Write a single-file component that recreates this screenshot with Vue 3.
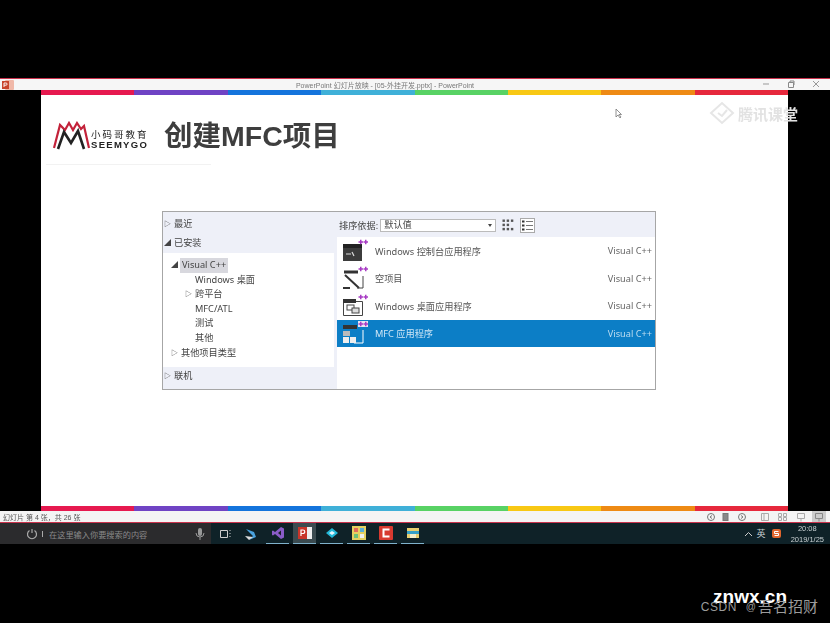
<template>
  <div class="page">
    <div class="window">
      <div class="titlebar">
        <svg class="ppt-icon" width="12" height="10" viewBox="0 0 12 10">
          <rect x="3" y="0" width="9" height="10" rx="1" fill="#f0b8a8" />
          <rect x="0" y="1" width="7" height="8" fill="#c8452c" />
          <path d="M2 7V3h2a1 1 0 0 1 0 2.2H2" fill="none" stroke="#fff" stroke-width="0.9" />
        </svg>
        <span class="doc-title">PowerPoint 幻灯片放映 - [05-外挂开发.pptx] - PowerPoint</span>
        <div class="win-btns">
          <svg width="8" height="8" viewBox="0 0 8 8"><path d="M1 4h6" stroke="#999" /></svg>
          <svg width="8" height="8" viewBox="0 0 8 8"><path d="M1.5 2.5h5v5h-5zM3 2.500V1h4v4" fill="none" stroke="#888" /></svg>
          <svg width="8" height="8" viewBox="0 0 8 8"><path d="M1 1l6 6M7 1l-6 6" stroke="#999" /></svg>
        </div>
      </div>

      <div class="slide">
        <div class="rainbow">
          <i v-for="c in stripe" :key="c" :style="{ background: c }"></i>
        </div>
        <div class="slide-head">
          <div class="logo">
            <svg width="37" height="29" viewBox="0 0 37 29">
              <path d="M1 27L7 4l5 5 4-7 4 7 4-7 4 6 3-3 5 22" fill="none" stroke="#c3223a" stroke-width="2.200" />
              <path d="M5 28L11 11l7 11 7-12 6 18" fill="none" stroke="#222" stroke-width="2.600" />
            </svg>
            <div class="logo-text">
              <span class="logo-cn">小码哥教育</span>
              <span class="logo-en">SEEMYGO</span>
            </div>
          </div>
          <h1>创建MFC项目</h1>
        </div>
        <div class="head-rule"></div>

        <div class="dialog">
          <div class="left-pane">
            <div class="group first"><span class="arr">▷</span>最近</div>
            <div class="group second"><span class="arr">◢</span>已安装</div>
            <div class="tree">
              <div class="tree-row vc"><span class="arr">◢</span><span class="vc-label">Visual C++</span></div>
              <div class="tree-row lv2">Windows 桌面</div>
              <div class="tree-row lv2 has-arr"><span class="arr">▷</span>跨平台</div>
              <div class="tree-row lv2">MFC/ATL</div>
              <div class="tree-row lv2">测试</div>
              <div class="tree-row lv2">其他</div>
              <div class="tree-row other"><span class="arr">▷</span>其他项目类型</div>
            </div>
            <div class="group online"><span class="arr">▷</span>联机</div>
          </div>

          <div class="right-pane">
            <div class="toolbar">
              <span>排序依据:</span>
              <div class="select"><span>默认值</span><em></em></div>
              <svg class="view" width="13" height="13" viewBox="0 0 13 13" fill="#555">
                <rect v-for="d in dots" :key="d.k" :x="d.x" :y="d.y" width="2.400" height="2.400" />
              </svg>
              <div class="view-on">
                <svg width="13" height="13" viewBox="0 0 13 13">
                  <path d="M5 2.500h7M5 6.500h7M5 10.500h7" stroke="#777" />
                  <path d="M1 1.500h2.500v2H1zM1 5.500h2.500v2H1zM1 9.500h2.500v2H1z" fill="#333" />
                </svg>
              </div>
            </div>
            <div class="list">
              <div v-for="(t, i) in templates" :key="t" class="tpl" :class="{ sel: i === 3 }">
                <svg class="tpl-icon" width="26" height="24" viewBox="0 0 26 24">
                  <template v-if="i === 0">
                    <rect x="1" y="5" width="19" height="17" fill="#3c3c3c" />
                    <rect x="1" y="5" width="19" height="4" fill="#222" />
                    <path d="M4 15h5M10 13l2 4" stroke="#ddd" stroke-width="1.200" />
                  </template>
                  <template v-else-if="i === 1">
                    <path d="M2 6h14" stroke="#333" stroke-width="3" />
                    <path d="M3 9l14 13M1 22h7" stroke="#333" stroke-width="2" fill="none" />
                    <path d="M21 10v12h-6" stroke="#444" fill="none" />
                  </template>
                  <template v-else-if="i === 2">
                    <path d="M1.500 7.500h19v14h-19z" fill="#fff" stroke="#444" />
                    <rect x="1" y="5" width="13" height="4" fill="#333" />
                    <rect x="5" y="11" width="7" height="5" fill="#fff" stroke="#444" />
                    <rect x="10" y="14" width="7" height="5" fill="#ddd" stroke="#444" />
                  </template>
                  <template v-else>
                    <rect x="1" y="4" width="14" height="4" fill="#333" />
                    <path d="M21 9v13H12" stroke="#fff" fill="none" />
                    <rect x="1" y="10" width="7" height="5" fill="#bbb" />
                    <rect x="1" y="16" width="6" height="6" fill="#eee" />
                    <rect x="8" y="16" width="6" height="6" fill="#eee" />
                    <rect x="16" y="0" width="10" height="6" fill="#e8e4f2" />
                  </template>
                  <path d="M16.500 3h4.500M18.750 .8v4.400M21.500 3h4.500M23.750 .8v4.400" stroke="#a83cc4" stroke-width="1.500" />
                </svg>
                <span class="tpl-name">{{ t }}</span>
                <span class="tpl-lang">Visual C++</span>
              </div>
            </div>
          </div>
        </div>

        <div class="slide-foot">
          <div class="rainbow">
            <i v-for="c in stripe" :key="c" :style="{ background: c }"></i>
          </div>
        </div>

        <svg class="cursor" width="8" height="11" viewBox="0 0 8 11">
          <path d="M1 1v8l2-2 2 3 1-1-2-2.500h2.500z" fill="#fff" stroke="#777" stroke-width="0.800" />
        </svg>
        <div class="tencent">
          <svg width="26" height="24" viewBox="0 0 26 24" fill="none" stroke="#e6e6e6" stroke-width="2">
            <path d="M2 12L13 2l11 10-11 10z" />
            <path d="M9 12l4 3 5-6" />
          </svg>
          <span>腾讯课堂</span>
        </div>
      </div>

      <div class="statusbar">
        <span>幻灯片 第 4 张，共 26 张</span>
        <div class="status-icons">
          <svg width="40" height="10" viewBox="0 0 40 10" fill="none" stroke="#777">
            <circle cx="5" cy="5" r="3.500" />
            <path d="M6 3.500L4 5l2 1.500" />
            <rect x="17" y="1.500" width="5" height="7" fill="#888" />
            <circle cx="36" cy="5" r="3.500" />
            <path d="M35 3.500L37 5l-2 1.500" />
          </svg>
          <svg class="views" width="48" height="10" viewBox="0 0 48 10" fill="none" stroke="#aaa">
            <path d="M1.500 1.500h7v7h-7zM4 1.500v7" />
            <path d="M18.500 1.500h3v3h-3zM23.500 1.500h3v3h-3zM18.500 5.500h3v3h-3zM23.500 5.500h3v3h-3z" />
            <path d="M37.500 1.500h7v5h-7zM41 6.500v3" />
          </svg>
          <div class="view-active">
            <svg width="10" height="10" viewBox="0 0 10 10" fill="none" stroke="#888">
              <path d="M1.500 1.500h7v5h-7zM5 6.500v3" />
            </svg>
          </div>
        </div>
      </div>
    </div>

    <div class="taskbar">
      <div class="search">
        <svg width="12" height="12" viewBox="0 0 12 12" fill="none" stroke="#aaa" stroke-width="1.200">
          <path d="M3.500 2.500a4.500 4.500 0 1 0 5 0M6 1v4" />
        </svg>
        <i class="sep"></i>
        <span class="search-text">在这里输入你要搜索的内容</span>
        <svg class="mic" width="10" height="12" viewBox="0 0 10 12" fill="#999">
          <rect x="3" y="0" width="4" height="8" rx="2" />
          <path d="M1 5a4 4 0 0 0 8 0M5 9v3" fill="none" stroke="#999" />
        </svg>
      </div>
      <div class="apps">
        <svg class="task-view" width="13" height="10" viewBox="0 0 13 10" fill="none" stroke="#ccc">
          <path d="M.500 1.500h7v7h-7zM10 1v1M10 4v1M10 7v1" />
        </svg>
        <div class="app" v-for="a in apps" :key="a.k" :class="{ active: a.k === 'ppt', plain: a.plain }">
          <svg width="14" height="14" viewBox="0 0 14 14">
            <template v-if="a.k === 'qq'">
              <path d="M2 2l8 3 2 5-7 3 4-4z" fill="#4aa3e0" />
              <path d="M1 9l8 1-4 3z" fill="#ddd" />
            </template>
            <template v-else-if="a.k === 'vs'">
              <path d="M10 1l3 1.500v9L10 13 4 8 2 9.500 1 9V5l1-.500L4 6z" fill="#8a5cc8" />
              <path d="M10 4.500v5L7 7z" fill="#1a2028" />
            </template>
            <template v-else-if="a.k === 'ppt'">
              <rect x="5" y="1" width="9" height="12" fill="#eee" />
              <rect x="0" y="1" width="9" height="12" fill="#c8352a" />
              <path d="M3 10V4h2a1.500 1.500 0 0 1 0 3.500H3" fill="none" stroke="#fff" stroke-width="1.200" />
            </template>
            <template v-else-if="a.k === 'dia'">
              <path d="M7 2l6 5-6 5-6-5z" fill="#22b8d8" />
              <path d="M4 7l3-2 3 2-3 2z" fill="#e8f8ff" />
            </template>
            <template v-else-if="a.k === 'pal'">
              <rect x="0" y="0" width="14" height="14" fill="#e4d060" />
              <rect x="2" y="2" width="4" height="4" fill="#e06a5a" />
              <rect x="8" y="2" width="4" height="4" fill="#5ab0d8" />
              <rect x="2" y="8" width="4" height="4" fill="#6ac078" />
              <rect x="8" y="8" width="4" height="4" fill="#f0f0f0" />
            </template>
            <template v-else-if="a.k === 'c'">
              <rect x="0" y="0" width="14" height="14" rx="1" fill="#d83a30" />
              <path d="M10.500 3.500h-6v7h6" fill="none" stroke="#fff" stroke-width="2" />
            </template>
            <template v-else>
              <path d="M1 2h12v10H1z" fill="#e8cf70" />
              <rect x="1" y="5" width="12" height="3" fill="#35a0c8" />
              <rect x="4" y="8" width="6" height="4" fill="#f4eecb" />
            </template>
          </svg>
        </div>
      </div>
      <div class="tray">
        <svg width="9" height="6" viewBox="0 0 9 6" fill="none" stroke="#ccc"><path d="M1 5l3.500-3.500L8 5" /></svg>
        <span class="ime">英</span>
        <svg width="9" height="9" viewBox="0 0 9 9">
          <rect width="9" height="9" rx="2" fill="#e0652c" />
          <path d="M6.500 2.500h-4v2h4v2h-4" fill="none" stroke="#fff" />
        </svg>
        <div class="clock"><span>20:08</span><span>2019/1/25</span></div>
      </div>
    </div>

    <div class="mark-site">znwx.cn</div>
    <div class="mark-csdn"><span class="csdn-en">CSDN</span><span class="csdn-at">@</span><span>吾名招财</span></div>
  </div>
</template>

<script setup>
const stripe = ['#e6194f', '#6f43c4', '#1474dc', '#3fb0d8', '#58d264', '#f8c814', '#ee8a14', '#e6283c']

const templates = ['Windows 控制台应用程序', '空项目', 'Windows 桌面应用程序', 'MFC 应用程序']

const apps = [
  { k: 'qq', plain: true },
  { k: 'vs' },
  { k: 'ppt' },
  { k: 'dia' },
  { k: 'pal' },
  { k: 'c' },
  { k: 'folder' },
]

const dots = []
for (let r = 0; r < 3; r++) {
  for (let c = 0; c < 3; c++) {
    if (r === 1 && c === 2) continue
    dots.push({ k: `${r}-${c}`, x: c * 4.2 + 0.5, y: r * 4.2 + 0.5 })
  }
}
</script>

<style>
html,
body {
  margin: 0;
  background: #000;
}
</style>

<style scoped>
.page {
  position: relative;
  width: 830px;
  height: 623px;
  padding-top: 78px;
  box-sizing: border-box;
  background: #000;
  overflow: hidden;
  font-family: "Liberation Sans", "Noto Sans CJK SC", sans-serif;
}
.window {
  background: #000;
  filter: blur(0.4px);
}
.titlebar {
  position: relative;
  display: flex;
  align-items: center;
  height: 12px;
  background: #f6f6f6;
  border-top: 1px solid #c9324c;
  box-sizing: border-box;
}
.ppt-icon {
  margin-left: 2px;
}
.doc-title {
  flex: 1;
  margin-right: 74px;
  text-align: center;
  font-size: 7px;
  color: #777;
}
.win-btns {
  position: absolute;
  right: 10px;
  top: 1px;
  display: flex;
  gap: 17px;
}
.slide {
  position: relative;
  width: 747px;
  height: 421px;
  margin-left: 41px;
  background: #fff;
  display: flex;
  flex-direction: column;
}
.rainbow {
  display: flex;
  height: 5px;
}
.rainbow i {
  flex: 1;
}
.slide-head {
  display: flex;
  align-items: center;
  height: 57px;
  margin-top: 12px;
  padding-left: 12px;
}
.logo {
  display: flex;
  align-items: flex-end;
  width: 111px;
}
.logo-text {
  display: flex;
  flex-direction: column;
  margin-left: 1px;
  line-height: 10px;
  color: #222;
}
.logo-cn {
  font-size: 9.500px;
  letter-spacing: 2px;
  white-space: nowrap;
}
.logo-en {
  font-size: 9.500px;
  font-weight: 700;
  letter-spacing: 1.300px;
}
h1 {
  margin: 0;
  font-size: 28.500px;
  line-height: 36px;
  font-weight: 700;
  color: #3e3e3e;
  font-family: "Liberation Sans", "Noto Sans CJK SC", sans-serif;
  white-space: nowrap;
}
.head-rule {
  width: 165px;
  height: 1px;
  margin-left: 5px;
  background: #f2f2f2;
}
.dialog {
  display: flex;
  width: 494px;
  height: 179px;
  margin: 46px 0 0 121px;
  box-sizing: border-box;
  border: 1px solid #a6a6a6;
  background: #eef0f8;
  font-family: "Noto Sans", "Noto Sans CJK SC", sans-serif;
  font-size: 9.200px;
  color: #444;
}
.left-pane {
  width: 171px;
  flex-shrink: 0;
}
.arr {
  display: inline-block;
  width: 10px;
  font-size: 7px;
  color: #444;
  vertical-align: 1px;
}
.group {
  height: 14px;
  line-height: 14px;
  padding-left: 1px;
}
.first {
  margin-top: 5px;
}
.second {
  margin-top: 5px;
}
.tree {
  height: 114px;
  margin-top: 3px;
  padding: 5px 0 0 8px;
  background: #fff;
  box-sizing: border-box;
}
.tree-row {
  height: 14.600px;
  line-height: 14.600px;
  white-space: nowrap;
}
.vc-label {
  display: inline-block;
  background: #d8d8de;
  padding: 0 2px;
  margin-left: -1px;
}
.lv2 {
  padding-left: 24px;
}
.has-arr {
  padding-left: 14px;
}
.online {
  margin-top: 2px;
}
.right-pane {
  flex: 1;
  display: flex;
  flex-direction: column;
  margin-left: 3px;
}
.toolbar {
  display: flex;
  align-items: center;
  height: 26px;
  flex-shrink: 0;
  padding-left: 2px;
}
.select {
  display: flex;
  align-items: center;
  justify-content: space-between;
  width: 116px;
  height: 13px;
  margin-left: 2px;
  padding: 0 3px;
  box-sizing: border-box;
  background: #fff;
  border: 1px solid #bbb;
  line-height: 10px;
}
.select em {
  border: 2.500px solid transparent;
  border-top: 3px solid #444;
  border-bottom: 0;
}
.view {
  margin-left: 6px;
}
.view-on {
  display: flex;
  align-items: center;
  justify-content: center;
  width: 15px;
  height: 15px;
  margin-left: 5px;
  border: 1px solid #aaa;
  background: #fff;
  box-sizing: border-box;
}
.list {
  flex: 1;
  background: #fff;
  margin-top: -1px;
}
.tpl {
  display: flex;
  align-items: center;
  height: 27.500px;
  padding: 0 3px 0 5px;
  color: #555;
}
.tpl-icon {
  flex-shrink: 0;
}
.tpl-name {
  flex: 1;
  margin-left: 7px;
}
.tpl-lang {
  color: #666;
}
.sel {
  background: #0c7ec6;
  color: #cfe6f6;
}
.sel .tpl-lang {
  color: #bcdcf0;
}
.slide-foot {
  margin-top: auto;
}
.cursor {
  position: absolute;
  left: 574px;
  top: 18px;
}
.tencent {
  position: absolute;
  left: 668px;
  top: 11px;
  display: flex;
  align-items: center;
  gap: 3px;
  font-size: 15px;
  font-weight: 700;
  color: #e2e2e2;
  white-space: nowrap;
}
.statusbar {
  display: flex;
  align-items: center;
  justify-content: space-between;
  height: 12px;
  padding-left: 3px;
  background: #f4f4f4;
  border-bottom: 1px solid #c9324c;
  box-sizing: border-box;
  font-size: 7px;
  color: #555;
}
.status-icons {
  display: flex;
  align-items: center;
  height: 100%;
}
.views {
  margin-left: 14px;
}
.view-active {
  display: flex;
  align-items: center;
  justify-content: center;
  width: 14px;
  height: 100%;
  margin: 0 4px;
  background: #ccc;
}
.taskbar {
  display: flex;
  align-items: center;
  height: 21px;
  background: #0f2228;
  filter: blur(0.4px);
}
.search {
  display: flex;
  align-items: center;
  width: 211px;
  height: 100%;
  padding-left: 26px;
  box-sizing: border-box;
  background: #2b2b2d;
  color: #8a8a8a;
  font-size: 8.200px;
}
.sep {
  width: 1px;
  height: 6px;
  margin: 0 6px 0 4px;
  background: #aaa;
}
.search-text {
  flex: 1;
  white-space: nowrap;
}
.mic {
  margin-right: 6px;
}
.apps {
  display: flex;
  align-items: center;
  height: 100%;
  margin-left: 9px;
}
.task-view {
  margin-right: 6px;
}
.app {
  display: flex;
  align-items: center;
  justify-content: center;
  width: 23px;
  height: 100%;
  margin-right: 4px;
  box-sizing: border-box;
  border-bottom: 1px solid #7fb2cc;
}
.plain {
  border-bottom: 0;
}
.active {
  background: #3b4b50;
}
.tray {
  display: flex;
  align-items: center;
  margin-left: auto;
  color: #c8d0d2;
  font-size: 9px;
}
.ime {
  margin: 0 6px 0 4px;
}
.clock {
  display: flex;
  flex-direction: column;
  align-items: center;
  margin: 0 6px 0 10px;
  font-size: 7.500px;
  line-height: 11px;
}
.mark-site {
  position: absolute;
  right: 43px;
  top: 586px;
  font-size: 19px;
  font-weight: 700;
  color: #fff;
  line-height: 22px;
  font-family: "Liberation Sans", sans-serif;
}
.mark-csdn {
  position: absolute;
  right: 12px;
  top: 599px;
  display: flex;
  align-items: center;
  font-size: 15px;
  line-height: 16px;
  color: #9c9c9c;
  white-space: nowrap;
}
.csdn-en {
  font-size: 12px;
  letter-spacing: 0.500px;
}
.csdn-at {
  margin: 0 2px 0 9px;
  font-size: 10px;
}
</style>
